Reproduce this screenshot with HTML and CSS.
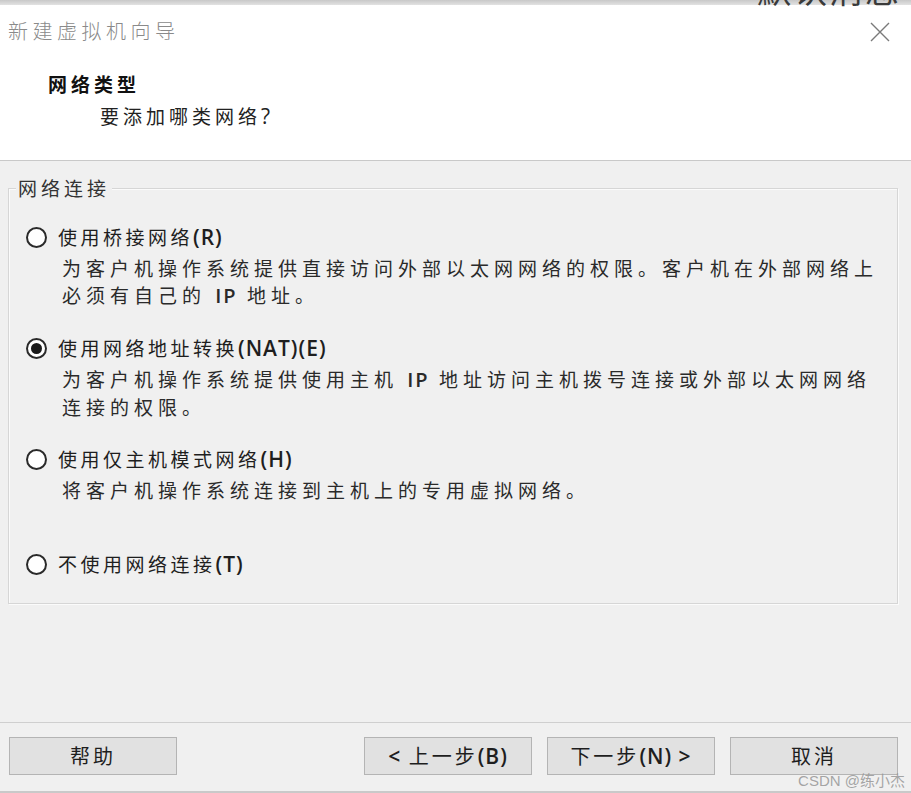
FILE: index.html
```html
<!DOCTYPE html>
<html lang="zh">
<head>
<meta charset="utf-8">
<title>新建虚拟机向导</title>
<link rel="stylesheet" href="styles.css">
</head>
<body>
<div class="window">
  <div class="topstrip"></div>
  <div class="peek"><span>默认消息</span></div>
  <header class="header">
    <div class="titlebar">
      <span class="title">新建虚拟机向导</span>
      <svg class="close" width="20" height="20" viewBox="0 0 20 20"><path d="M1 1 L19 19 M19 1 L1 19" stroke="#7a7a7a" stroke-width="1.4" fill="none"/></svg>
    </div>
    <div class="heading">网络类型</div>
    <div class="subheading">要添加哪类网络<span class="en">?</span></div>
  </header>
  <main class="main">
    <div class="group">
      <div class="legend">网络连接</div>
      <div class="option">
        <div class="label"><span class="radio"></span>使用桥接网络<span class="en">(R)</span></div>
        <div class="desc">为客户机操作系统提供直接访问外部以太网网络的权限。客户机在外部网络上<br>必须有自己的 <span class="en">IP</span> 地址。</div>
      </div>
      <div class="option">
        <div class="label"><span class="radio checked"></span>使用网络地址转换<span class="en">(NAT)(E)</span></div>
        <div class="desc">为客户机操作系统提供使用主机 <span class="en">IP</span> 地址访问主机拨号连接或外部以太网网络<br>连接的权限。</div>
      </div>
      <div class="option">
        <div class="label"><span class="radio"></span>使用仅主机模式网络<span class="en">(H)</span></div>
        <div class="desc">将客户机操作系统连接到主机上的专用虚拟网络。</div>
      </div>
      <div class="option">
        <div class="label"><span class="radio"></span>不使用网络连接<span class="en">(T)</span></div>
      </div>
    </div>
  </main>
  <footer class="footer">
    <div class="buttons">
      <button class="btn">帮助</button>
      <div class="spacer"></div>
      <button class="btn"><span class="en">&lt;</span> 上一步<span class="en">(B)</span></button>
      <button class="btn">下一步<span class="en">(N) &gt;</span></button>
      <button class="btn">取消</button>
    </div>
    <div class="watermark">CSDN @练小杰</div>
  </footer>
</div>
</body>
</html>
```
FILE: styles.css
```css
* { box-sizing: border-box; }
html, body { margin: 0; padding: 0; }
body {
  width: 911px;
  height: 793px;
  overflow: hidden;
  font-family: "Noto Sans CJK SC", "DejaVu Sans", sans-serif;
  background: #f0f0f0;
  color: #1e1e1e;
}
.window {
  position: relative;
  display: flex;
  flex-direction: column;
  height: 793px;
}
.topstrip {
  height: 5px;
  background: linear-gradient(#c8c8c8, #e2e2e2);
}
.peek {
  position: absolute;
  top: 0;
  right: 10px;
  height: 8px;
  overflow: hidden;
}
.peek span {
  display: block;
  margin-top: -31px;
  font-size: 34px;
  line-height: 40px;
  letter-spacing: 2px;
  color: #3a3a3a;
}
.en {
  font-family: "Open Sans", "Noto Sans", sans-serif;
  font-weight: 600;
  letter-spacing: 1px;
  font-size: 21px;
}
.header {
  height: 156px;
  background: #fff;
  border-bottom: 1px solid #c9c9c9;
  padding-top: 12px;
}
.titlebar {
  display: flex;
  align-items: center;
  justify-content: space-between;
  padding: 0 21px 0 8px;
  height: 28px;
}
.title {
  font-size: 20px;
  line-height: 28px;
  color: #8a8a8a;
  letter-spacing: 4.5px;
  font-weight: 300;
}
.close { display: block; margin-top: 2px; }
.heading {
  margin: 25px 0 0 48px;
  font-size: 19px;
  line-height: 28px;
  font-weight: 700;
  letter-spacing: 4px;
  color: #111;
}
.subheading {
  margin: 4px 0 0 100px;
  font-size: 19px;
  line-height: 28px;
  letter-spacing: 4px;
  color: #222;
}
.subheading .en { font-weight: 500; }
.main {
  flex: 1;
  padding: 27px 13px 0 8px;
}
.group {
  border: 1px solid #d6d6d6;
  box-shadow: inset 1px 1px 0 #fbfbfb, 1px 1px 0 #fbfbfb;
  padding: 20px 10px 23px 17px;
  height: 416px;
}
.legend {
  width: fit-content;
  margin: -35px 0 0 -10px;
  padding: 0 2px;
  background: #f0f0f0;
  font-size: 19px;
  line-height: 28px;
  letter-spacing: 4px;
  color: #333;
}
.option { margin-top: 21px; }
.option + .option { margin-top: 25px; }
.option:last-child { margin-top: 20px; }
.label {
  display: flex;
  align-items: center;
  font-size: 19px;
  line-height: 28px;
  letter-spacing: 3.5px;
  color: #1e1e1e;
  white-space: pre;
}
.radio {
  width: 21px;
  height: 21px;
  border: 2px solid #2a2a2a;
  border-radius: 50%;
  background: #fff;
  margin-right: 11px;
  flex: none;
  position: relative;
}
.radio.checked::after {
  content: "";
  position: absolute;
  left: 3px;
  top: 3px;
  width: 11px;
  height: 11px;
  border-radius: 50%;
  background: #1a1a1a;
}
.desc {
  margin: 3px 0 0 36px;
  min-height: 54px;
  font-size: 19px;
  line-height: 27px;
  letter-spacing: 5px;
  color: #2a2a2a;
}
.desc .en { letter-spacing: 2px; font-size: 20px; }
.footer {
  position: relative;
  height: 71px;
  border-top: 1px solid #cfcfcf;
  border-bottom: 2px solid #c9c9c9;
  padding: 14px 13px 0 9px;
}
.buttons {
  display: flex;
  gap: 15px;
}
.spacer { flex: 1; }
.btn {
  width: 168px;
  height: 38px;
  border: 1px solid #b4b4b4;
  background: #e1e1e1;
  font-family: "Noto Sans CJK SC", "DejaVu Sans", sans-serif;
  font-size: 20px;
  line-height: 28px;
  letter-spacing: 3px;
  color: #1e1e1e;
  padding: 0;
}
.btn .en { font-size: 21px; letter-spacing: 1px; }
.watermark {
  position: absolute;
  right: 6px;
  bottom: 0;
  font-family: "Liberation Sans", "Noto Sans CJK SC", sans-serif;
  font-size: 15px;
  line-height: 20px;
  color: rgba(150,150,150,0.85);
}
```
